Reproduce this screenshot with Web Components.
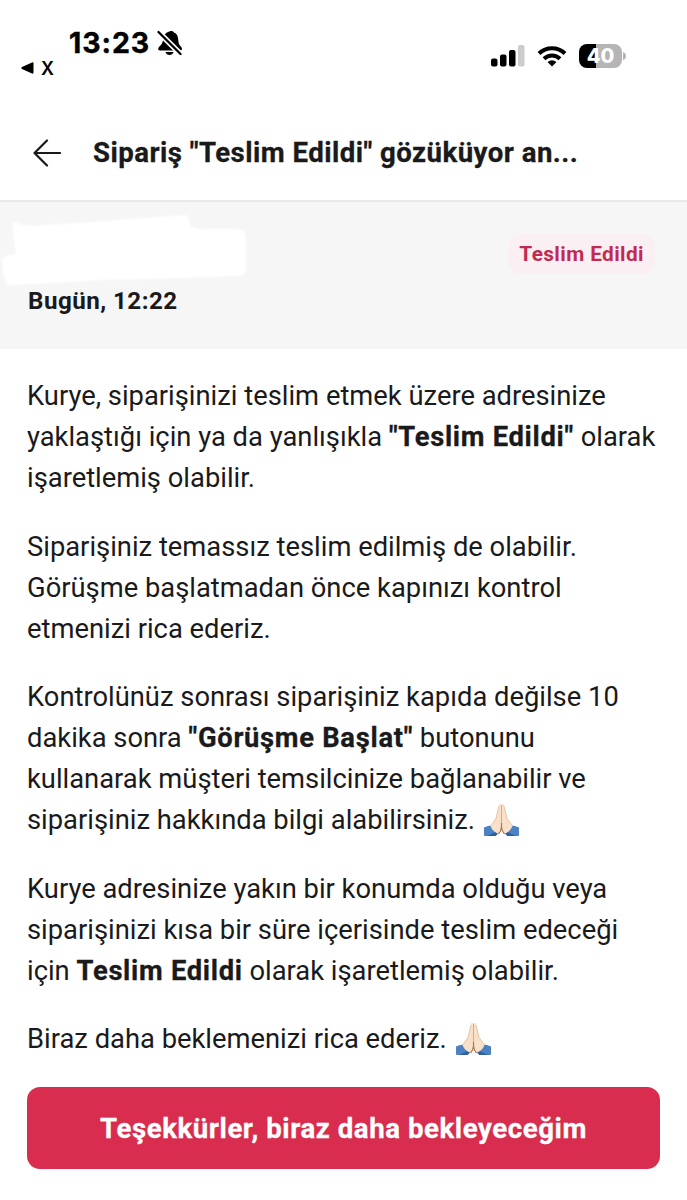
<!DOCTYPE html>
<html lang="tr">
<head>
<meta charset="UTF-8">
<title>Sipariş Yardım</title>
<style>
    body {
        margin: 0;
        background: #fff;
        color: #1a1a1c;
        font-family: Roboto, "Liberation Sans", sans-serif;
    }
</style>
</head>
<body>
<help-page>
    <status-bar slot="status" time="13:23" back="X" battery="40"></status-bar>
    <page-header slot="header">Sipariş "Teslim Edildi" gözüküyor an...</page-header>
    <order-summary slot="summary" date="Bugün, 12:22">
        <status-badge>Teslim Edildi</status-badge>
    </order-summary>
    <help-text>
        <p>Kurye, siparişinizi teslim etmek üzere adresinize<br>yaklaştığı için ya da yanlışıkla <b>"Teslim Edildi"</b> olarak<br>işaretlemiş olabilir.</p>
        <p>Siparişiniz temassız teslim edilmiş de olabilir.<br>Görüşme başlatmadan önce kapınızı kontrol<br>etmenizi rica ederiz.</p>
        <p>Kontrolünüz sonrası siparişiniz kapıda değilse 10<br>dakika sonra <b>"Görüşme Başlat"</b> butonunu<br>kullanarak müşteri temsilcinize bağlanabilir ve<br>siparişiniz hakkında bilgi alabilirsiniz. <folded-hands></folded-hands></p>
        <p>Kurye adresinize yakın bir konumda olduğu veya<br>siparişinizi kısa bir süre içerisinde teslim edeceği<br>için <b>Teslim Edildi</b> olarak işaretlemiş olabilir.</p>
        <p>Biraz daha beklemenizi rica ederiz. <folded-hands></folded-hands></p>
    </help-text>
    <primary-button slot="action">Teşekkürler, biraz daha bekleyeceğim</primary-button>
</help-page>

<script>
class StatusBar extends HTMLElement {
    constructor() {
        super();
        this.attachShadow({ mode: 'open' });
    }

    connectedCallback() {
        this.shadowRoot.innerHTML = `
            <style>
                :host {
                    display: flex;
                    justify-content: space-between;
                    box-sizing: border-box;
                    height: 106px;
                    padding: 26px 61px 0 21px;
                    color: #000;
                    font-family: Inter, "Liberation Sans", sans-serif;
                }
                .time {
                    display: flex;
                    align-items: center;
                    gap: 7px;
                    height: 33px;
                    padding-left: 48px;
                    font-size: 28.5px;
                    font-weight: 700;
                    letter-spacing: 0.9px;
                    -webkit-text-stroke: 0.4px #000;
                }
                .back {
                    display: flex;
                    align-items: center;
                    gap: 7px;
                    height: 18px;
                    font-size: 18px;
                    font-weight: 600;
                }
                .icons {
                    display: flex;
                    align-items: center;
                    height: 24px;
                    padding-top: 18px;
                }
                .wifi { margin-left: 12px; }
                .battery {
                    display: flex;
                    align-items: center;
                    justify-content: center;
                    width: 43px;
                    height: 24px;
                    margin-left: 12px;
                    border-radius: 8px;
                    background: linear-gradient(90deg, #000 40%, #b5b5b5 40%);
                    color: #fff;
                    font-size: 20px;
                    font-weight: 800;
                }
                .cap { margin-left: 1px; }
                svg { display: block; flex: none; }
            </style>
            <div>
                <div class="time">
                    <span>${this.getAttribute('time')}</span>
                    <svg width="26" height="28" viewBox="0 0 26 28">
                        <path d="M12.500 2.500C13.500 1.700 16 2 17 3.500c3 1 4 4 4.200 7 .2 4 1 5.500 3 7.500 1.400 1.500 1 3.500-1 3.500H3c-2 0-2.400-2-1-3.500 2-2 3.800-3.500 4-7.500.2-4 2-6.500 6.500-8z"/>
                        <path d="M8.500 23h8c-.5 2-2 3-4 3s-3.500-1-4-3z"/>
                        <path d="M1.500 3 23.500 25" stroke="#fff" stroke-width="5.500"/>
                        <path d="M1.500 3 23.500 25" stroke="#000" stroke-width="2.300" stroke-linecap="round"/>
                    </svg>
                </div>
                <div class="back">
                    <svg width="13" height="12" viewBox="0 0 13 12"><path d="M1 5 11 .4q1.500-.5 1.500 1v9.200q0 1.500-1.500 1L1 7q-1.300-1 0-2z"/></svg>
                    <span>${this.getAttribute('back')}</span>
                </div>
            </div>
            <div class="icons">
                <svg width="34" height="22" viewBox="0 0 34 22">
                    <rect x="0" y="13.500" width="6.500" height="8" rx="2"/>
                    <rect x="9" y="9.500" width="6.500" height="12" rx="2"/>
                    <rect x="18" y="5" width="6.500" height="16.500" rx="2"/>
                    <rect x="27" y="0" width="6.500" height="21.500" rx="2" fill="#ccc"/>
                </svg>
                <svg class="wifi" width="30" height="22" viewBox="0 0 30 22" fill="none" stroke="#000" stroke-width="4">
                    <path d="M2 8.500a18.500 18.500 0 0 1 26 0"/>
                    <path d="M7 13.700a11.500 11.500 0 0 1 16 0"/>
                    <path d="M15 21.500 10.500 17q4.500-3.500 9 0z" fill="#000" stroke="none"/>
                </svg>
                <div class="battery">${this.getAttribute('battery')}</div>
                <svg class="cap" width="3" height="8" viewBox="0 0 3 8"><path d="M0 0q3 1 3 4t-3 4z" fill="#b5b5b5"/></svg>
            </div>
        `;
    }
}

class PageHeader extends HTMLElement {
    constructor() {
        super();
        this.attachShadow({ mode: 'open' });
        this.shadowRoot.innerHTML = `
            <style>
                :host {
                    display: flex;
                    align-items: center;
                    gap: 32px;
                    box-sizing: border-box;
                    height: 96px;
                    padding: 0 33px 1px;
                    border-bottom: 2px solid #e9e9e9;
                    font-size: 27.6px;
                    font-weight: 700;
                    letter-spacing: 0.46px;
                    white-space: nowrap;
                    -webkit-text-stroke: 0.3px #1a1a1c;
                }
                svg { flex: none; }
            </style>
            <svg width="28" height="28" viewBox="0 0 28 28" fill="none" stroke="#1a1a1c" stroke-width="2.200" stroke-linecap="round" stroke-linejoin="round">
                <path d="M27 14H1.500M14 1.500 1.500 14 14 26.500"/>
            </svg>
            <slot></slot>
        `;
    }
}

class StatusBadge extends HTMLElement {
    constructor() {
        super();
        this.attachShadow({ mode: 'open' });
        this.shadowRoot.innerHTML = `
            <style>
                :host {
                    display: block;
                    padding: 0 11px;
                    border-radius: 14px;
                    background: #faeff2;
                    color: #c32a50;
                    font-size: 20.8px;
                    font-weight: 700;
                    line-height: 40px;
                    letter-spacing: 0.4px;
                }
            </style>
            <slot></slot>
        `;
    }
}

class OrderSummary extends HTMLElement {
    constructor() {
        super();
        this.attachShadow({ mode: 'open' });
    }

    connectedCallback() {
        this.shadowRoot.innerHTML = `
            <style>
                :host {
                    display: block;
                    box-sizing: border-box;
                    height: 147px;
                    padding-top: 10px;
                    background: #f6f6f6;
                }
                .row {
                    display: flex;
                    justify-content: space-between;
                    align-items: flex-start;
                    height: 73px;
                    padding-right: 32px;
                }
                svg { filter: blur(1.2px); }
                slot {
                    display: block;
                    padding-top: 22px;
                }
                .date {
                    padding-left: 28px;
                    font-size: 24.2px;
                    font-weight: 700;
                    line-height: 32px;
                    letter-spacing: 0.45px;
                }
            </style>
            <div class="row">
                <svg width="252" height="74" viewBox="0 212 252 74">
                    <path d="M12 222q0-1 5 1 8 3 16 3l58-4 54-4 40-3q4 0 5 12l12 2 38 0q5 1 6 8v32q0 6-6 7l-92 3-48 1-45 3-44 2q-5 0-7-7l-2-14q-1-6 6-9l8-1z" fill="#fff"/>
                </svg>
                <slot></slot>
            </div>
            <div class="date">${this.getAttribute('date')}</div>
        `;
    }
}

class HelpText extends HTMLElement {
    constructor() {
        super();
        this.attachShadow({ mode: 'open' });
        this.shadowRoot.innerHTML = `
            <style>
                :host {
                    display: flex;
                    flex-direction: column;
                    gap: 27.5px;
                    padding: 27px 0 0 27px;
                    font-size: 27.35px;
                    line-height: 41px;
                    white-space: nowrap;
                    --bold-spacing: 0.7px;
                }
                ::slotted(p) { margin: 0; }
            </style>
            <slot></slot>
        `;
    }

    connectedCallback() {
        // ::slotted only reaches the paragraphs, so the bold runs are styled here
        this.querySelectorAll('b').forEach((bold) => {
            bold.style.letterSpacing = 'var(--bold-spacing)';
            bold.style.webkitTextStroke = '0.3px #1a1a1c';
        });
    }
}

class FoldedHands extends HTMLElement {
    constructor() {
        super();
        this.attachShadow({ mode: 'open' });
        this.shadowRoot.innerHTML = `
            <style>
                :host {
                    display: inline-block;
                    width: 35px;
                    height: 33px;
                    margin-left: 2px;
                    vertical-align: -7px;
                    line-height: 0;
                }
            </style>
            <svg width="35" height="33" viewBox="0 0 35 33">
                <path d="M0 24.500Q4 22.500 8 22.500L15 29.500 11.500 33H1q-1 0-1-1z" fill="#4c82c4"/>
                <path d="M35 24.500Q31 22.500 27 22.500L20 29.500 23.500 33H34q1 0 1-1z" fill="#4c82c4"/>
                <path d="M3 33 12.500 28.500 15 29.500 11.500 33zM32 33 22.500 28.500 20 29.500 23.500 33z" fill="#2f5f9e"/>
                <path d="M17.500 1.500Q15.300-.5 14.800 2.500L11.500 15.500 6.500 23q2 5.500 8 8L17.500 27z" fill="#f8e0c9"/>
                <path d="M17.500 1.500Q19.700-.5 20.200 2.500L23.500 15.500 28.500 23q-2 5.500-8 8L17.500 27z" fill="#f8e0c9"/>
                <path d="M17.500 2v19" fill="none" stroke="#d6ab8c" stroke-width="1"/>
                <path d="M17.500 20v4q-.3 4-3 7M17.500 24q.3 4 3 7" fill="none" stroke="#a8795c" stroke-width="1.200"/>
                <path d="M15 3 12 15.500 6.500 23M20 3 23 15.500 28.500 23" fill="none" stroke="#e3bf9f" stroke-width=".8"/>
            </svg>
        `;
    }
}

class PrimaryButton extends HTMLElement {
    constructor() {
        super();
        this.attachShadow({ mode: 'open' });
        this.shadowRoot.innerHTML = `
            <style>
                :host { display: block; }
                button {
                    display: block;
                    width: 100%;
                    height: 82px;
                    padding: 0;
                    border: 0;
                    border-radius: 13px;
                    background: #d82d4e;
                    color: #fff;
                    font: inherit;
                    font-size: 27.6px;
                    font-weight: 700;
                    letter-spacing: 0.57px;
                    -webkit-text-stroke: 0.3px #fff;
                }
            </style>
            <button type="button"><slot></slot></button>
        `;
    }
}

class HelpPage extends HTMLElement {
    constructor() {
        super();
        this.attachShadow({ mode: 'open' });
        this.shadowRoot.innerHTML = `
            <style>
                :host {
                    display: flex;
                    flex-direction: column;
                    width: 687px;
                    height: 1200px;
                    overflow: hidden;
                }
                main { flex: 1; }
                footer { padding: 0 27px 31px; }
            </style>
            <slot name="status"></slot>
            <slot name="header"></slot>
            <slot name="summary"></slot>
            <main><slot></slot></main>
            <footer><slot name="action"></slot></footer>
        `;
    }
}

customElements.define('status-bar', StatusBar);
customElements.define('page-header', PageHeader);
customElements.define('status-badge', StatusBadge);
customElements.define('order-summary', OrderSummary);
customElements.define('folded-hands', FoldedHands);
customElements.define('help-text', HelpText);
customElements.define('primary-button', PrimaryButton);
customElements.define('help-page', HelpPage);
</script>
</body>
</html>
